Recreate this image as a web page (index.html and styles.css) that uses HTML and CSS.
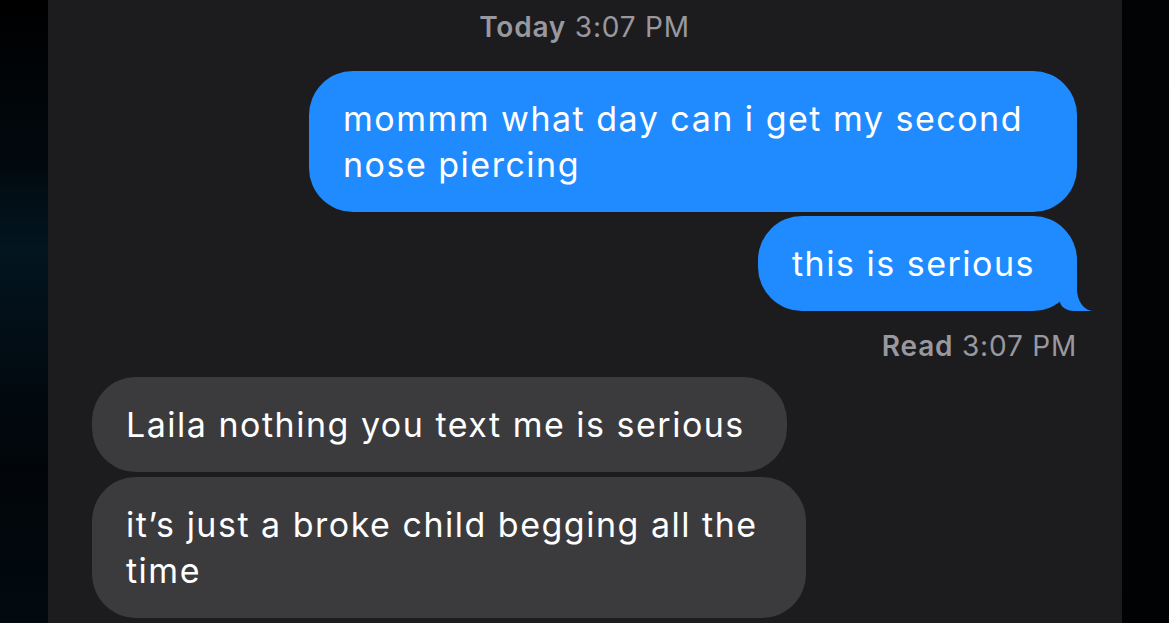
FILE: index.html
```html
<!DOCTYPE html>
<html lang="en">
<head>
  <meta charset="UTF-8" />
  <meta name="viewport" content="width=device-width, initial-scale=1.0"/>
  <title>Messages</title>
  <link rel="stylesheet" href="styles.css">
</head>
<body>
  <div class="screen">
    <div class="edge edge-left"></div>

    <!-- Conversation -->
    <main class="thread">
      <p class="stamp"><strong>Today</strong> 3:07 PM</p>

      <div class="row sent">
        <div class="bubble">mommm what day can i get my second nose piercing</div>
      </div>
      <div class="row sent">
        <div class="bubble tail">this is serious</div>
      </div>
      <p class="receipt"><strong>Read</strong> 3:07 PM</p>

      <div class="row received">
        <div class="bubble">Laila nothing you text me is serious</div>
      </div>
      <div class="row received">
        <div class="bubble wide">it’s just a broke child begging all the time</div>
      </div>
    </main>

    <div class="edge edge-right"></div>
  </div>
</body>
</html>
```

FILE: styles.css
```css
html, body {
  margin: 0;
  height: 100%;
  background-color: #000;
  overflow: hidden;
}
body {
  font-family: Inter, "Open Sans", "Liberation Sans", sans-serif;
}
.screen {
  display: flex;
  height: 623px;
}
.edge {
  width: 48px;
  flex-shrink: 0;
}
.edge-left {
  background: linear-gradient(180deg, #000 0%, #01080d 25%, #031520 40%, #020d15 55%, #010509 75%, #020a10 100%);
}
.edge-right {
  width: 47px;
  background: linear-gradient(180deg, #020304 0%, #010203 100%);
}
.thread {
  flex: 1;
  background-color: #1c1c1e;
  display: flex;
  flex-direction: column;
  padding: 0 45px 0 44px;
}
.stamp,
.receipt {
  margin: 0;
  color: #98989e;
  font-size: 28px;
  line-height: 32px;
  letter-spacing: 0.8px;
}
.stamp strong,
.receipt strong {
  font-weight: 600;
}
.stamp {
  text-align: center;
  padding-top: 11px;
  margin-bottom: 28px;
}
.receipt {
  text-align: right;
  padding: 15px 0 0;
  margin-bottom: 15px;
}
.row {
  display: flex;
  margin-bottom: 4px;
}
.sent {
  justify-content: flex-end;
}
.received {
  justify-content: flex-start;
  margin-bottom: 5px;
}
.bubble {
  position: relative;
  font-size: 34px;
  line-height: 46px;
  letter-spacing: 1.5px;
  color: #fff;
  padding: 25px 42px 24px 34px;
  border-radius: 44px;
  box-sizing: border-box;
}
.sent .bubble {
  background-color: #1f8bfe;
  max-width: 768px;
}
.received .bubble {
  background-color: #3b3b3d;
  max-width: 714px;
}
.received .bubble.wide {
  width: 714px;
}
/* tail on the last sent bubble */
.tail::before,
.tail::after {
  content: "";
  position: absolute;
  bottom: 0;
  height: 50px;
}
.tail::before {
  right: -16px;
  width: 33px;
  background-color: #1f8bfe;
  border-bottom-left-radius: 14px 10px;
}
.tail::after {
  right: -40px;
  width: 40px;
  background-color: #1c1c1e;
  border-bottom-left-radius: 16px 22px;
}
```
